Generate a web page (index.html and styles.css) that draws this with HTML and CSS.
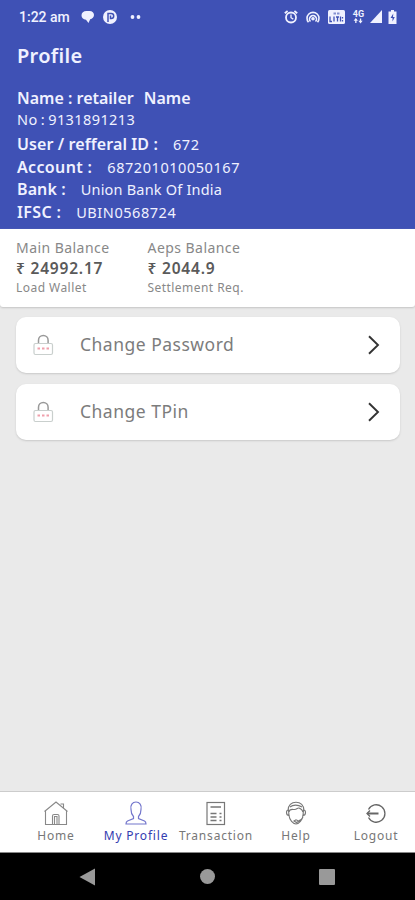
FILE: index.html
```html
<!DOCTYPE html>
<html lang="en">
<head>
    <meta charset="UTF-8">
    <meta name="viewport" content="width=device-width, initial-scale=1.0">
    <title>Profile</title>
    <link rel="stylesheet" href="styles.css">
</head>
<body>
    <div class="app">
        <header class="header">
            <div class="status-bar">
                <span class="time">1:22 am</span>
                <div class="notices">
                    <svg class="chat" width="13" height="12" viewBox="0 0 13 12" fill="currentColor">
                        <path d="M5.500 0h3C11.400 0 13 1.700 13 4S11.300 7.900 9.200 8.300L7.500 12L5 8.800C2 8.600 0.500 6.700 0.500 4.300S2.500 0 5.500 0z"></path>
                    </svg>
                    <svg class="round" width="14" height="14" viewBox="0 0 14 14" fill="none">
                        <circle cx="7" cy="7" r="7" fill="currentColor"></circle>
                        <path d="M5 12V3.500h3.200a2.500 2.500 0 0 1 0 5H7.500V5.500" stroke="#3f51b5" stroke-width="1.500"></path>
                    </svg>
                    <svg width="12" height="4" viewBox="0 0 12 4" fill="currentColor">
                        <circle cx="2.500" cy="2" r="1.900"></circle>
                        <circle cx="8.500" cy="2" r="1.900"></circle>
                    </svg>
                </div>
                <div class="signals">
                    <svg width="14" height="14" viewBox="0 0 14 14" fill="none" stroke="currentColor" stroke-width="1.800">
                        <circle cx="7" cy="7.500" r="5"></circle>
                        <path d="M0.800 3.300L3.600 1M13.200 3.300L10.400 1"></path>
                        <path d="M7 4.500v3.200l2.300 1.400" stroke-width="1.300"></path>
                    </svg>
                    <svg width="14" height="14" viewBox="0 0 14 14" fill="none" stroke="currentColor" stroke-width="1.600">
                        <path d="M2.500 12.300A6 6 0 1 1 11.500 12.300"></path>
                        <path d="M4.500 11.500A3.500 3.500 0 1 1 9.500 11.500"></path>
                        <circle cx="7" cy="8.800" r="1" fill="currentColor"></circle>
                    </svg>
                    <svg width="17" height="14" viewBox="0 0 17 14">
                        <rect width="17" height="14" rx="1.500" fill="currentColor"></rect>
                        <path d="M5.500 3.500h2.500M9 3.500h2.500" stroke="#8490d0" stroke-width="2"></path>
                        <path d="M2 6.500v5h2M6 6.500v5M8 7h3M9.500 7v4.500M12.500 6.500v5M14.500 7v1.500M14.500 10v1.500" fill="none" stroke="#3f51b5" stroke-width="1.300"></path>
                    </svg>
                    <div class="network">
                        <span>4G</span>
                        <svg width="10" height="6" viewBox="0 0 10 6" fill="currentColor">
                            <path d="M2.800 0L5 2.800H3.500V5H2.200V2.800H0.600zM7.500 5.500L5.400 2.700H6.900V0.500H8.200V2.700H9.700z"></path>
                        </svg>
                    </div>
                    <svg width="12" height="13" viewBox="0 0 12 13" fill="currentColor">
                        <path d="M12 0v13H0z"></path>
                    </svg>
                    <svg width="9" height="14" viewBox="0 0 9 14">
                        <path d="M3 0h3v1.500h2.500V14h-8V1.500H3z" fill="currentColor"></path>
                        <path d="M5.300 3.500L2.500 8h2v3.500L6.800 7H5z" fill="#3f51b5"></path>
                    </svg>
                </div>
            </div>
            <h1 class="title">Profile</h1>
            <div class="details">
                <p class="name"><span>Name : retailer</span><span>Name</span></p>
                <p class="phone">No : 9131891213</p>
                <p class="row user"><b>User / refferal ID :</b><span>672</span></p>
                <p class="row account"><b>Account :</b><span>687201010050167</span></p>
                <p class="row bank"><b>Bank :</b><span>Union Bank Of India</span></p>
                <p class="row ifsc"><b>IFSC :</b><span>UBIN0568724</span></p>
            </div>
        </header>

        <section class="balances">
            <div class="balance">
                <p class="label">Main Balance</p>
                <p class="amount">₹ 24992.17</p>
                <p class="action">Load Wallet</p>
            </div>
            <div class="balance">
                <p class="label">Aeps Balance</p>
                <p class="amount">₹ 2044.9</p>
                <p class="action">Settlement Req.</p>
            </div>
        </section>

        <main class="menu">
            <div class="card">
                <svg class="lock" width="22" height="22" viewBox="0 0 22 22" fill="none">
                    <path d="M5.500 9V6.200a4.800 4.800 0 0 1 9.600 0V9" stroke="#999" stroke-width="1.500"></path>
                    <rect x="1" y="9.500" width="18.500" height="11" rx="1.500" stroke="#c9cfcd" stroke-width="1.200"></rect>
                    <path d="M4.500 14.500h2.500M9 14.500h2.500M13.500 14.500h2.500" stroke="#f0a0ac" stroke-width="2"></path>
                </svg>
                <span class="card-text">Change Password</span>
                <svg class="chevron" width="12" height="20" viewBox="0 0 12 20" fill="none" stroke="#333" stroke-width="1.900">
                    <path d="M1 1.200L10 10L1 18.800"></path>
                </svg>
            </div>
            <div class="card">
                <svg class="lock" width="22" height="22" viewBox="0 0 22 22" fill="none">
                    <path d="M5.500 9V6.200a4.800 4.800 0 0 1 9.600 0V9" stroke="#999" stroke-width="1.500"></path>
                    <rect x="1" y="9.500" width="18.500" height="11" rx="1.500" stroke="#c9cfcd" stroke-width="1.200"></rect>
                    <path d="M4.500 14.500h2.500M9 14.500h2.500M13.500 14.500h2.500" stroke="#f0a0ac" stroke-width="2"></path>
                </svg>
                <span class="card-text">Change TPin</span>
                <svg class="chevron" width="12" height="20" viewBox="0 0 12 20" fill="none" stroke="#333" stroke-width="1.900">
                    <path d="M1 1.200L10 10L1 18.800"></path>
                </svg>
            </div>
        </main>

        <nav class="tabs">
            <div class="tab">
                <svg width="26" height="26" viewBox="0 0 26 26" fill="none" stroke="#888" stroke-width="1.100">
                    <path d="M2.500 11v13.500h21V11M1.500 11.500L13 2l11.500 9.500M17.500 4h3v4.500M9.500 24.500V16a1.500 1.500 0 0 1 1.500-1.500h3.500A1.500 1.500 0 0 1 16 16v8.500M11.500 24v-7.500h2.500V24"></path>
                </svg>
                <span>Home</span>
            </div>
            <div class="tab active">
                <svg width="26" height="26" viewBox="0 0 26 26" fill="none" stroke="#7376cc" stroke-width="1.200">
                    <path d="M10.500 16.500C8.500 14.500 8 12 8 9.500C7 5 9.500 2 13 2s6 3 5 7.500c0 2.500-0.500 5-2.500 7v2l6 2.500c1 0.500 1.500 1.500 1.500 3H3c0-1.500 0.500-2.500 1.500-3l6-2.500z"></path>
                </svg>
                <span>My Profile</span>
            </div>
            <div class="tab">
                <svg width="26" height="26" viewBox="0 0 26 26" fill="none" stroke="#777" stroke-width="1.200">
                    <rect x="4" y="2.500" width="17.500" height="22"></rect>
                    <path d="M7.500 7h10.500M7.500 13.500h6M7.500 17h6M7.500 20.500h6M16.500 13.500h2M16.500 17h2M16.500 20.500h2" stroke-width="1.500"></path>
                </svg>
                <span>Transaction</span>
            </div>
            <div class="tab">
                <svg width="26" height="26" viewBox="0 0 26 26" fill="none" stroke="#777" stroke-width="1.100">
                    <path d="M5 10.500C5 5.500 8.500 2.200 13 2.200s8 3.300 8 8.300M5.500 10c-1.500 0-2 1-2 2.500s1 3 2.500 3zM20.500 10c1.500 0 2 1 2 2.500s-1 3-2.500 3z"></path>
                    <path d="M6 15.500c0.500 4.500 4 8.500 7 8.500s6.500-4 7-8.500M6 12C6.500 8.500 9 9.500 11.500 9.500c2.500 0 3-2 4.500-1.500s3.500 2 4 4M7 7c3-2.500 8-2.500 12 0M11 21l2-1.200l3 1.200l-2.500 1.500zM16 20.500c2 0 3-1.500 4-3.500"></path>
                </svg>
                <span>Help</span>
            </div>
            <div class="tab">
                <svg width="26" height="26" viewBox="0 0 26 26" fill="none" stroke="#666" stroke-width="1.300">
                    <path d="M5.500 9.500a8.700 8.700 0 1 1 0 8"></path>
                    <path d="M4.500 13.500h11" stroke-width="2"></path>
                    <path d="M7 10.500L4 13.500l3 3"></path>
                </svg>
                <span>Logout</span>
            </div>
        </nav>

        <footer class="system-bar">
            <svg width="16" height="18" viewBox="0 0 16 18" fill="#999"><path d="M16 0.500v17L0.500 9z"></path></svg>
            <svg width="16" height="16" viewBox="0 0 16 16" fill="#999"><circle cx="8.500" cy="7.500" r="7.500"></circle></svg>
            <svg width="16" height="16" viewBox="0 0 16 16" fill="#999"><rect width="16" height="16" rx="1"></rect></svg>
        </footer>
    </div>
</body>
</html>
```
FILE: styles.css
```css
:root {
    --primary: #3f51b5;
    --page-bg: #eaeaea;
    --header-text: #f0f1ff;
    --muted: #888;
}

* {
    margin: 0;
    padding: 0;
    box-sizing: border-box;
}

body {
    background: var(--page-bg);
    font-family: 'Noto Sans', 'Open Sans', sans-serif;
}

svg {
    display: block;
    flex: none;
}

.app {
    display: flex;
    flex-direction: column;
    width: 415px;
    height: 900px;
    overflow: hidden;
    white-space: nowrap;
}

/* Header */
.header {
    height: 229px;
    background: var(--primary);
    color: var(--header-text);
}

.status-bar {
    display: flex;
    align-items: center;
    height: 33px;
    padding: 0 18px 0 19px;
}

.time {
    width: 62px;
    font-family: Roboto, sans-serif;
    font-size: 14px;
    font-weight: 500;
}

.notices {
    display: flex;
    align-items: center;
    gap: 9px;
}

.notices .round {
    margin-right: 4px;
}

.signals {
    display: flex;
    align-items: center;
    gap: 8px;
    margin-left: auto;
}

.network {
    display: flex;
    flex-direction: column;
    align-items: center;
    width: 11px;
    margin-right: -2px;
    font: 700 9px/8px Roboto, sans-serif;
}

.signals svg:last-child {
    margin-left: -2px;
}

.title {
    height: 54px;
    padding-left: 17px;
    font-size: 20px;
    font-weight: 600;
    line-height: 46px;
    letter-spacing: 0.3px;
}

.details {
    padding-left: 17px;
}

.name {
    display: flex;
    gap: 10px;
    height: 21px;
    font-size: 16px;
    font-weight: 600;
    line-height: 22px;
}

.phone {
    height: 25px;
    font-size: 14.5px;
    line-height: 22px;
    letter-spacing: 0.4px;
    word-spacing: -1px;
}

.row {
    display: flex;
    gap: 15px;
    height: 22.6px;
    font-size: 14.5px;
    line-height: 23px;
    letter-spacing: 0.55px;
}

.row b {
    font-size: 16px;
    font-weight: 600;
    letter-spacing: 0.35px;
}

.user b,
.bank b {
    letter-spacing: 0.1px;
}

.bank {
    letter-spacing: 0.2px;
}

/* Balances */
.balances {
    display: flex;
    height: 78px;
    padding: 8px 16px 0;
    background: #fff;
    border-radius: 0 0 3px 3px;
    box-shadow: 0 1px 2px #c4c4c4;
    color: var(--muted);
}

.balance {
    width: 131.5px;
}

.label {
    font-size: 14px;
    line-height: 21px;
    letter-spacing: 0.45px;
}

.amount {
    color: #5a5a5a;
    font-size: 15.5px;
    font-weight: 600;
    line-height: 20px;
    letter-spacing: 0.8px;
}

.action {
    font-size: 12px;
    line-height: 19px;
    letter-spacing: 0.45px;
}

/* Menu cards */
.menu {
    display: flex;
    flex: 1;
    flex-direction: column;
    gap: 11px;
    padding: 10px 15px 0 16px;
}

.card {
    display: flex;
    align-items: center;
    height: 56px;
    padding: 0 20px 0 17px;
    background: #fff;
    border-radius: 10px;
    box-shadow: 0 1px 2px #c8c8c8;
}

.card-text {
    margin-left: 25px;
    padding-bottom: 3px;
    color: #7c7c7c;
    font-size: 17.5px;
    letter-spacing: 0.5px;
}

.chevron {
    margin-left: auto;
}

/* Bottom tabs */
.tabs {
    display: flex;
    height: 62px;
    padding-left: 16px;
    background: #fff;
    border-top: 1px solid #ccc;
    border-bottom: 1px solid #888;
}

.tab {
    display: flex;
    flex: none;
    flex-direction: column;
    align-items: center;
    width: 80px;
    padding-top: 8px;
    color: #777;
    font-size: 12px;
    line-height: 19px;
    letter-spacing: 0.8px;
}

.tab.active {
    color: #343cb0;
}

/* Android buttons */
.system-bar {
    display: flex;
    align-items: center;
    justify-content: space-between;
    height: 47px;
    padding: 0 80px 0 79px;
    background: #000;
}
```
